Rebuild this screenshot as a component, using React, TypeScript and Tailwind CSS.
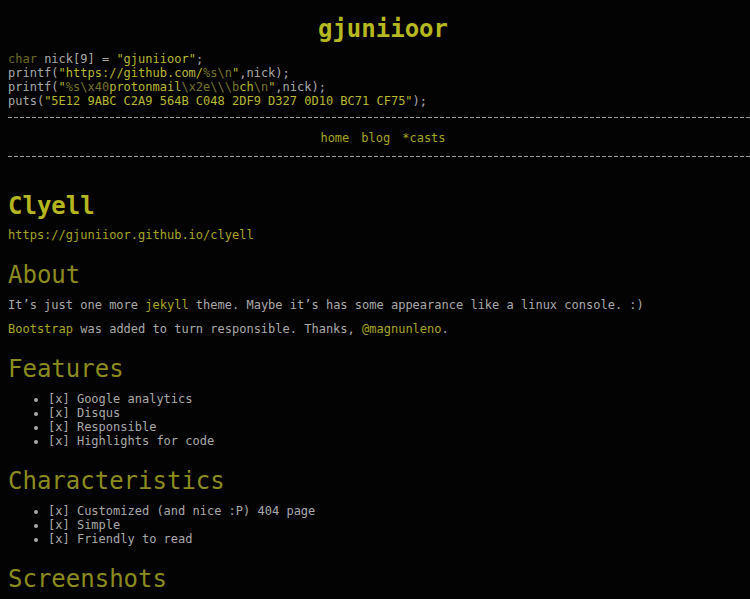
const Dashes = () => (
  <div className="h-px w-full bg-[repeating-linear-gradient(to_right,#9a9a9a_0px,#9a9a9a_4px,transparent_4px,transparent_6px)]"></div>
);

const Str = ({ children }: { children: React.ReactNode }) => (
  <span className="text-[#b8b830]">{children}</span>
);

const Esc = ({ children }: { children: React.ReactNode }) => (
  <span className="text-[#74742a]">{children}</span>
);

const Link = ({ children }: { children: React.ReactNode }) => (
  <a className="text-[#a6a622]">{children}</a>
);

const features = [
  "Google analytics",
  "Disqus",
  "Responsible",
  "Highlights for code",
];

const characteristics = [
  "Customized (and nice :P) 404 page",
  "Simple",
  "Friendly to read",
];

const App = () => {
  return (
    <div className="min-h-[599px] overflow-hidden bg-[#030303] font-['DejaVu_Sans_Mono',monospace] text-[12px] leading-[14px] text-[#a9a9a9]">
      <div className="ml-2 w-[750px]">
        <h1 className="mt-[15px] text-center text-[24px] font-bold leading-[28px] text-[#b5b81e]">
          gjuniioor
        </h1>

        <pre className="mt-[9px] font-['DejaVu_Sans_Mono',monospace] text-[12px] leading-[14px]">
          <span className="text-[#6a6a22]">char</span> nick[9] ={" "}
          <Str>"gjuniioor"</Str>;{"\n"}
          printf(<Str>"https://github.com/</Str>
          <Esc>%s\n</Esc>
          <Str>"</Str>,nick);{"\n"}
          printf(<Str>"</Str>
          <Esc>%s\x40</Esc>
          <Str>protonmail</Str>
          <Esc>\x2e\\\b</Esc>
          <Str>ch</Str>
          <Esc>\n</Esc>
          <Str>"</Str>,nick);{"\n"}
          puts(<Str>"5E12 9ABC C2A9 564B C048 2DF9 D327 0D10 BC71 CF75"</Str>);
        </pre>

        <div className="mt-[9px]">
          <Dashes />
        </div>
        <nav className="flex justify-center gap-3 pt-[13px] pb-[11px]">
          <Link>home</Link>
          <Link>blog</Link>
          <Link>*casts</Link>
        </nav>
        <Dashes />

        <h1 className="mt-[35px] text-[24px] font-bold leading-[28px] text-[#b5b520]">
          Clyell
        </h1>
        <p className="mt-[8px]">
          <Link>https://gjuniioor.github.io/clyell</Link>
        </p>

        <h2 className="mt-[19px] text-[24px] leading-[28px] text-[#8c8c1e]">
          About
        </h2>
        <p className="mt-[9px]">
          It’s just one more <Link>jekyll</Link> theme. Maybe it’s has some
          appearance like a linux console. :)
        </p>
        <p className="mt-[10px]">
          <Link>Bootstrap</Link> was added to turn responsible. Thanks,{" "}
          <Link>@magnunleno</Link>.
        </p>

        <h2 className="mt-[19px] text-[24px] leading-[28px] text-[#8c8c1e]">
          Features
        </h2>
        <ul className="mt-[9px] list-disc pl-10">
          {features.map((f) => (
            <li key={f}>[x] {f}</li>
          ))}
        </ul>

        <h2 className="mt-[19px] text-[24px] leading-[28px] text-[#8c8c1e]">
          Characteristics
        </h2>
        <ul className="mt-[9px] list-disc pl-10">
          {characteristics.map((c) => (
            <li key={c}>[x] {c}</li>
          ))}
        </ul>

        <h2 className="mt-[19px] text-[24px] leading-[28px] text-[#8c8c1e]">
          Screenshots
        </h2>
      </div>
    </div>
  );
};

export default App;
